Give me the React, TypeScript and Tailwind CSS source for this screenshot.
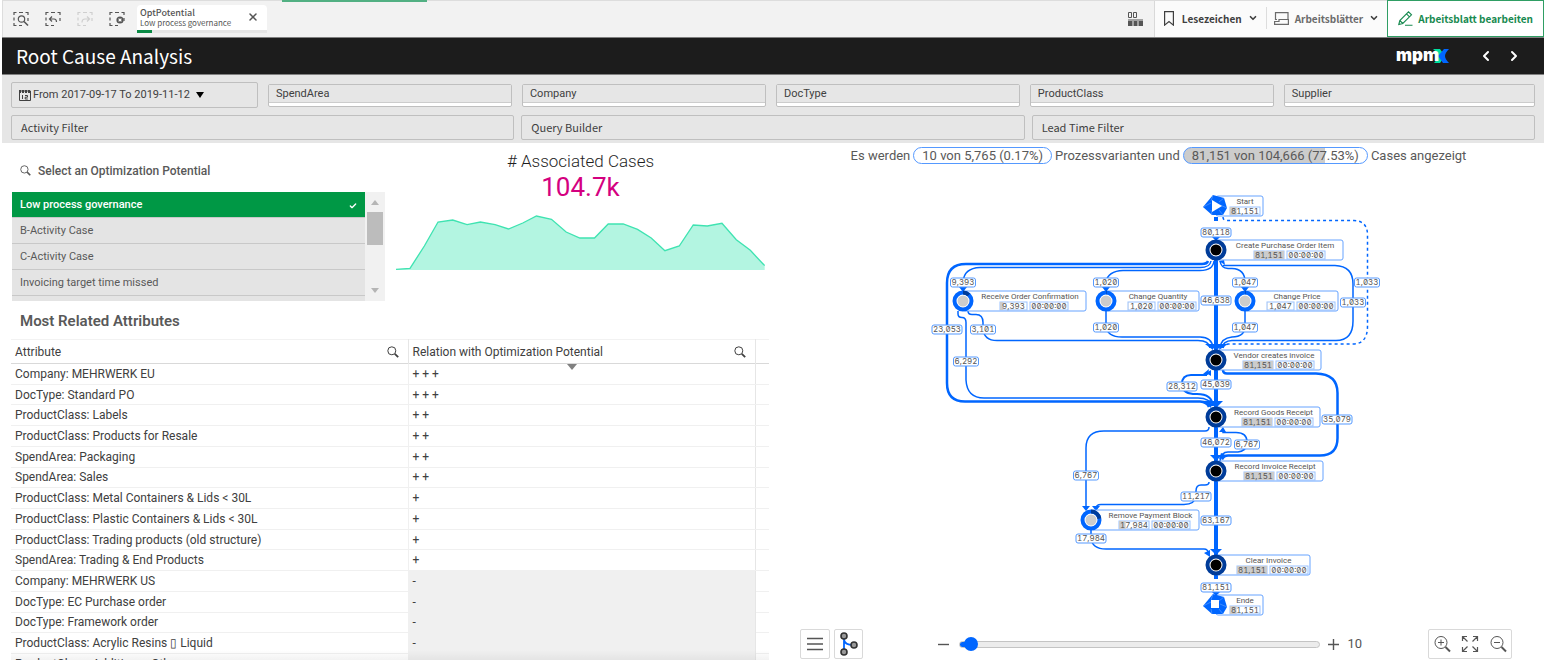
import React, { useState } from 'react';
import { Check, ChevronDown, ChevronLeft, ChevronRight, X } from 'lucide-react';

const filters = ['SpendArea', 'Company', 'DocType', 'ProductClass', 'Supplier'];
const wideFilters = ['Activity Filter', 'Query Builder', 'Lead Time Filter'];
const potentials = ['Low process governance', 'B-Activity Case', 'C-Activity Case', 'Invoicing target time missed'];

const attributes = [
  { name: 'Company: MEHRWERK EU', relation: '+ + +' },
  { name: 'DocType: Standard PO', relation: '+ + +' },
  { name: 'ProductClass: Labels', relation: '+ +' },
  { name: 'ProductClass: Products for Resale', relation: '+ +' },
  { name: 'SpendArea: Packaging', relation: '+ +' },
  { name: 'SpendArea: Sales', relation: '+ +' },
  { name: 'ProductClass: Metal Containers & Lids < 30L', relation: '+' },
  { name: 'ProductClass: Plastic Containers & Lids < 30L', relation: '+' },
  { name: 'ProductClass: Trading products (old structure)', relation: '+' },
  { name: 'SpendArea: Trading & End Products', relation: '+' },
  { name: 'Company: MEHRWERK US', relation: '-' },
  { name: 'DocType: EC Purchase order', relation: '-' },
  { name: 'DocType: Framework order', relation: '-' },
  { name: 'ProductClass: Acrylic Resins \u25AF Liquid', relation: '-' },
  { name: 'ProductClass: Additives - Other', relation: '-' },
];

type ProcessNode = {
  name: string;
  x: number;
  y: number;
  right: number;
  count: string;
  share: number;
  kind: 'full' | 'partial' | 'start' | 'end';
};

const nodes: ProcessNode[] = [
  { name: 'Start', x: 296, y: 26, right: 343, count: '81,151', share: 0.22, kind: 'start' },
  { name: 'Create Purchase Order Item', x: 296, y: 70, right: 423, count: '81,151', share: 1, kind: 'full' },
  { name: 'Receive Order Confirmation', x: 43, y: 121, right: 166, count: '9,393', share: 0.12, kind: 'partial' },
  { name: 'Change Quantity', x: 186, y: 121, right: 279, count: '1,020', share: 0.01, kind: 'partial' },
  { name: 'Change Price', x: 325, y: 121, right: 418, count: '1,047', share: 0.01, kind: 'partial' },
  { name: 'Vendor creates invoice', x: 296, y: 180, right: 401, count: '81,151', share: 1, kind: 'full' },
  { name: 'Record Goods Receipt', x: 296, y: 237, right: 400, count: '81,151', share: 1, kind: 'full' },
  { name: 'Record Invoice Receipt', x: 296, y: 291, right: 403, count: '81,151', share: 1, kind: 'full' },
  { name: 'Remove Payment Block', x: 171, y: 340, right: 279, count: '17,984', share: 0.22, kind: 'partial' },
  { name: 'Clear Invoice', x: 296, y: 385, right: 390, count: '81,151', share: 1, kind: 'full' },
  { name: 'Ende', x: 296, y: 425, right: 343, count: '81,151', share: 0.22, kind: 'end' },
];

const edges = [
  { d: 'M296 37v4M296 80v90M296 190v37M296 247v34M296 301v74M296 395v4', width: 4 },
  { d: 'M288 81Q287 84 282 84H46Q27 84 27 103V203Q27 221.500 45 221.500H280Q287 222 289 227', width: 2.5 },
  { d: 'M291 81Q290 87.500 280 87.500H60Q44 88 43 102V111', width: 1.5 },
  { d: 'M294 81Q293 90.500 280 90.500H203Q188 91 186 102V111', width: 1.5 },
  { d: 'M186 131V146Q187 157 202 157H280Q292 157 293 168', width: 1.5 },
  { d: 'M48 131q0 3.500 4 3.500h4q7 0 7 8V149Q64 160.500 77 160.500H278Q289 160.500 290 168', width: 1.5 },
  { d: 'M38 131v3q0 3.500 4 3.500q4 0 4 5V200Q47 218 64 218H278Q290 218 292 226', width: 1.5 },
  { d: 'M293 226Q292 214 277 214H273Q262 213 262 204Q262 195 271 195H287', width: 2 },
  { d: 'M300 81Q301 88 308 88.500H312Q325 89 325 102V111', width: 1.5 },
  { d: 'M325 131V146Q325 157 312 157Q301 158 300 168', width: 1.5 },
  { d: 'M303 85.500H415Q433 86 433 104V141Q433 160.500 416 160.500H312Q303 161 302 168', width: 1.5 },
  { d: 'M303 190q0 3.500 4 3.500H396Q417.500 194 417.500 213V258Q417.500 275.500 400 275.500H308q-4 0-6 4', width: 2.5 },
  { d: 'M289 247q0 4-4 4H184Q166 251 166 268V329', width: 1.5 },
  { d: 'M300 281Q301 272 308 272H318Q327 271 327 262Q327 252.500 316 252.500H303V250', width: 1.5 },
  { d: 'M289 302q0 3-4 3h-4q-5 0-5 6V316Q275 324.500 264 324.500H181q-5 0-5 4', width: 1.5 },
  { d: 'M171 350V358Q172 369 186 369H284q4 0 5 5', width: 1.5 },
];

const arrows = [
  'M291 56h10l-5 5z',
  'M289 164h14l-7 7z',
  'M289 221h14l-7 7z',
  'M290 275h12l-6 6z',
  'M290 369h12l-6 6z',
  'M291 411h10l-5 5z',
  'M39 107h8l-4 5z',
  'M182 107h8l-4 5z',
  'M321 107h8l-4 5z',
  'M283 221l9-1-1 8z',
  'M285 164h8v6z',
  'M299 170l1-6h8z',
  'M289 189l-1 6-5-1z',
  'M286 193l5-3v6z',
  'M299 81l5-1 1 5z',
  'M299 279l2-6 7 3z',
  'M299 252l4-5 3 5z',
  'M162 326h8l-4 5z',
  'M172 326h8l-4 5z',
  'M284 373l6-3v7z',
];

const edgeLabels = [
  { text: '80,118', x: 296, y: 52 },
  { text: '9,393', x: 43, y: 102 },
  { text: '1,020', x: 186, y: 102 },
  { text: '1,047', x: 325, y: 102 },
  { text: '1,033', x: 447, y: 102 },
  { text: '46,638', x: 296, y: 120 },
  { text: '1,033', x: 433, y: 122 },
  { text: '1,020', x: 186, y: 147 },
  { text: '1,047', x: 325, y: 147 },
  { text: '23,053', x: 27, y: 149 },
  { text: '3,101', x: 63, y: 149 },
  { text: '6,292', x: 46, y: 181 },
  { text: '45,039', x: 296, y: 204 },
  { text: '28,312', x: 262, y: 206 },
  { text: '35,079', x: 417, y: 239 },
  { text: '46,072', x: 296, y: 262 },
  { text: '6,767', x: 327, y: 264 },
  { text: '6,767', x: 166, y: 295 },
  { text: '11,217', x: 276, y: 316 },
  { text: '63,167', x: 296, y: 340 },
  { text: '17,984', x: 171, y: 358 },
  { text: '81,151', x: 296, y: 407 },
];

// Dashed selection frame shared by the selection tools
function SelectionIcon({ children, muted }: { children: React.ReactNode; muted?: boolean }) {
  return (
    <svg viewBox="0 0 16 16" className={`w-4 h-4 ${muted ? 'text-[#cfcfcf]' : 'text-[#555555]'}`} fill="none" stroke="currentColor" strokeWidth="1.2">
      <path d="M1 4V1.500h2.500M6 1.500h4M12.500 1.500H15V4M1 6.500v3M1 12v2.500h2.500M6 14.500h3M15 7v3" />
      {children}
    </svg>
  );
}

function Magnifier({ className }: { className?: string }) {
  return (
    <svg viewBox="0 0 12 12" className={className} fill="none" stroke="currentColor">
      <circle cx="4.800" cy="4.800" r="4" strokeWidth="1" />
      <path d="M7.800 7.800l3.400 3.400" strokeWidth="1.800" />
    </svg>
  );
}

function TopBar() {
  return (
    <header className="flex h-[37px] items-stretch bg-[#f2f2f2] border-t border-l border-[#dddddd] relative font-['Noto_Sans_CJK_SC','Noto_Sans',sans-serif]">
      <div className="absolute -top-px left-[279px] w-[145px] h-0.5 bg-[#52b083]" />
      <div className="flex items-center gap-4 pl-2.5">
        <button aria-label="Smart search">
          <SelectionIcon><circle cx="8.500" cy="8" r="3.200" /><path d="M11 10.500l4 4" strokeWidth="1.600" /></SelectionIcon>
        </button>
        <button aria-label="Step back">
          <SelectionIcon><path d="M7 5.500L4.500 8 7 10.500M4.500 8H9q2.500 0 2.500 3" /></SelectionIcon>
        </button>
        <button aria-label="Step forward">
          <SelectionIcon muted><path d="M10 5.500L12.500 8 10 10.500M12.500 8H8q-3 0-3 3.500" /></SelectionIcon>
        </button>
        <button aria-label="Clear all selections">
          <SelectionIcon><circle cx="11" cy="9" r="3.600" fill="currentColor" stroke="none" /><path d="M9.600 7.600l2.800 2.800M12.400 7.600L9.600 10.400" stroke="#ffffff" /></SelectionIcon>
        </button>
      </div>
      <div className="ml-3 mt-1 w-[130px] h-7 bg-white flex flex-col justify-between rounded-t-sm">
        <div className="flex items-center justify-between pl-[3px] pr-2 pt-0.5 text-[#555555]">
          <div>
            <p className="text-[9px] leading-[11px] font-medium">OptPotential</p>
            <p className="text-[8px] leading-[9px]">Low process governance</p>
          </div>
          <button aria-label="Clear OptPotential"><X className="w-3 h-3" strokeWidth={3} /></button>
        </div>
        <div className="h-[3px] bg-[#e6e6e6]"><div className="h-full w-[15px] bg-[#0a8a45]" /></div>
      </div>

      <div className="ml-auto flex items-stretch text-[#404040] text-[10px] font-bold">
        <button aria-label="Sheet grid" className="pl-4 pr-[11px]">
          <svg viewBox="0 0 15 15" className="w-[15px] h-[15px]" fill="none" stroke="#555555">
            <path d="M.5.500h3v5h-3zM5.500.500h3v5h-3z" />
            <path d="M0 8h15" />
            <path d="M0 9h4.500v5H0zM5.500 9h4v5h-4zM10.500 9H15v5h-4.500z" fill="#555555" stroke="none" />
          </svg>
        </button>
        <div className="flex items-center bg-[#fbfbfb] border-l border-[#d9d9d9] pb-0.5">
          <button className="flex items-center pl-[9px] pr-2">
            <svg viewBox="0 0 10 15" className="w-2.5 h-[15px]" fill="none" stroke="currentColor" strokeWidth="1.200"><path d="M.6.600h8.800v13.500L5 10.500.600 14.100z" /></svg>
            <span className="ml-2">Lesezeichen</span>
            <ChevronDown className="ml-1.5 w-2.5 h-2.5" strokeWidth={4} />
          </button>
          <div className="w-px h-[22px] bg-[#dddddd]" />
          <button className="flex items-center pl-[7px] pr-2 text-[#6b6b6b]">
            <svg viewBox="0 0 15 13" className="w-[15px] h-[13px]" fill="none" stroke="currentColor" strokeWidth="1.200"><path d="M3 7.500H1.500V.600h12.500V8M5 7.500h9.400v4.900H.600V9.500H5z" /></svg>
            <span className="ml-1.5">Arbeitsblätter</span>
            <ChevronDown className="ml-1.5 w-2.5 h-2.5 text-[#404040]" strokeWidth={4} />
          </button>
        </div>
        <button className="flex items-center bg-white border border-[#2f9e64] -mt-px px-2.5 text-[#188a50]">
          <svg viewBox="0 0 15 15" className="w-[15px] h-[15px]" fill="none" stroke="currentColor" strokeWidth="1.100"><path d="M.8 13.500l1-4L10.500.800l3 3L4.800 12.500zM1.800 9.500l3 3M8.500 2.800l3 3M7 14.300h7.500" /></svg>
          <span className="ml-[5px]">Arbeitsblatt bearbeiten</span>
        </button>
      </div>
    </header>
  );
}

function TitleBar() {
  return (
    <div className="flex items-center h-[38px] bg-[#1c1c1c] border-y border-[#808080] pl-3.5 pr-[22px] text-white">
      <h1 className="text-[19px] leading-6 font-['Noto_Sans_CJK_SC','Noto_Sans',sans-serif]">Root Cause Analysis</h1>
      <svg viewBox="0 -6 54 30" className="ml-auto w-[54px] h-[30px]">
        <path d="M37 2h7l5 7-5 7h-6q4-4 4-7t-5-7z" fill="#00e0a0" />
        <path d="M53 2h-5l-6 7 5 7h6q-4-4-4-7t4-7z" fill="#0066ff" />
        <text x="0" y="14" fontSize="17" fontWeight="900" fill="#ffffff" className="font-['Inter',sans-serif]">mpm</text>
      </svg>
      <button aria-label="Previous sheet" className="ml-7"><ChevronLeft className="w-4 h-4" strokeWidth={3} /></button>
      <button aria-label="Next sheet" className="ml-3"><ChevronRight className="w-4 h-4" strokeWidth={3} /></button>
    </div>
  );
}

function FilterBar() {
  return (
    <div className="bg-[#e6e6e6] px-[9px] pt-[7px] pb-[3px] text-[11px] text-[#404040]">
      <div className="flex items-center gap-2.5">
        <button className="flex items-center w-[247px] h-[26px] border border-[#bfbfbf] rounded-xs px-[7px]">
          <svg viewBox="0 0 12 12" className="w-3 h-3" fill="none" stroke="#404040">
            <path d="M.5 2v9.500h11V2z" />
            <path d="M0 2.500h12" strokeWidth="3" strokeDasharray="2 1" />
            <path d="M3.500 6v4M6 6.500h2.500v1.700H6.200V10h2.600" />
          </svg>
          <span className="ml-0.5">From 2017-09-17 To 2019-11-12</span>
          <span className="ml-1.5 border-x-4 border-x-transparent border-t-[6px] border-t-black" />
        </button>
        {filters.map((f) => (
          <button key={f} className="flex-1 last:flex-[1.03] h-[23px] border border-[#bfbfbf] rounded-xs bg-white pb-[3px]">
            <span className="flex items-center h-full px-[7px] pt-0.5 bg-[#e6e6e6] border-b border-[#cccccc]">{f}</span>
          </button>
        ))}
      </div>
      <div className="flex gap-[7px] mt-[7px]">
        {wideFilters.map((f) => (
          <button key={f} className="flex-1 h-[25px] border border-[#bfbfbf] rounded-xs px-[9px] text-left font-['Noto_Sans_CJK_SC','Noto_Sans',sans-serif]">{f}</button>
        ))}
      </div>
    </div>
  );
}

function PotentialList() {
  const [selected, setSelected] = useState(potentials[0]);

  return (
    <section className="w-[374px]">
      <h2 className="flex items-center gap-[7px] h-[49px] pl-[9px] pt-1.5 text-[12px] font-medium text-[#595959]">
        <Magnifier className="w-[11px] h-[11px]" />
        Select an Optimization Potential
      </h2>
      <div className="flex h-[109px] ml-px overflow-hidden text-[11px] text-[#595959]">
        <ul className="flex-1 bg-[#e4e4e4]">
          {potentials.map((p) => (
            <li key={p}>
              <button
                onClick={() => setSelected(p)}
                className={`flex items-center justify-between w-full h-[26px] px-2 pt-0.5 border-b border-[#c8c8c8] ${p === selected ? 'bg-[#009845] text-white font-medium' : ''}`}
              >
                {p}
                {p === selected && <Check className="w-2 h-2" strokeWidth={4} />}
              </button>
            </li>
          ))}
        </ul>
        <div className="flex flex-col items-center w-5 bg-[#f1f1f1] py-2">
          <span className="border-x-4 border-x-transparent border-b-[5px] border-b-[#b5b5b5]" />
          <span className="mt-[7px] w-4 h-[33px] bg-[#bcbcbc]" />
          <span className="mt-auto border-x-4 border-x-transparent border-t-[5px] border-t-[#b5b5b5]" />
        </div>
      </div>
    </section>
  );
}

function CasesKpi() {
  return (
    <section className="flex-1 flex flex-col items-center pl-[11px] pt-2 pr-1">
      <h2 className="text-[17px] leading-5 font-light text-[#1f1f1f]">{'# Associated Cases'}</h2>
      <p className="text-[26px] leading-8 text-[#d4007f]">104.7k</p>
      <svg viewBox="20 222 1106 168" preserveAspectRatio="none" className="mt-[11px] w-full h-14">
        <path
          d="M20 388L62 385L105 318L146 246L190 240L233 254L273 246L317 254L357 267L400 249L441 228L486 238L530 276L571 294H615L656 252H701L744 268L785 294L826 332L869 318L911 255L953 258L997 250L1040 299L1082 331L1125 377V390H20z"
          fill="#b3f5e1"
        />
        <path
          d="M20 388L62 385L105 318L146 246L190 240L233 254L273 246L317 254L357 267L400 249L441 228L486 238L530 276L571 294H615L656 252H701L744 268L785 294L826 332L869 318L911 255L953 258L997 250L1040 299L1082 331L1125 377"
          fill="none"
          stroke="#3fe3b1"
          strokeWidth="4"
        />
      </svg>
    </section>
  );
}

function AttributeTable() {
  return (
    <section>
      <h2 className="pl-[9px] h-[38px] leading-10 text-[15px] font-semibold text-[#595959]">Most Related Attributes</h2>
      <table className="w-full h-[336px] table-fixed border-collapse text-[12px] leading-4 text-[#404040]">
        <thead>
          <tr className="h-6 border-t border-t-[#f2f2f2] border-b border-b-[#d9d9d9] text-left">
            <th className="px-1 font-normal border-r border-[#e6e6e6]">
              <span className="flex items-center justify-between pr-[5px]">
                Attribute
                <button aria-label="Search Attribute"><Magnifier className="w-3 h-3" /></button>
              </span>
            </th>
            <th className="relative w-[347px] px-1 font-normal border-r border-[#e6e6e6]">
              <span className="flex items-center justify-between pr-[5px]">
                Relation with Optimization Potential
                <button aria-label="Search Relation"><Magnifier className="w-3 h-3" /></button>
              </span>
              <span className="absolute left-[158px] top-6 border-x-[5px] border-x-transparent border-t-[6px] border-t-[#808080]" />
            </th>
            <th className="w-3.5" />
          </tr>
        </thead>
        <tbody>
          {attributes.map((a) => (
            <tr key={a.name}>
              <td className="px-1 border-r border-b border-[#f0f0f0] whitespace-nowrap">{a.name}</td>
              <td className={`px-1 border-r border-[#e6e6e6] ${a.relation === '-' ? 'bg-[#f0f0f0]' : 'border-b border-b-[#f0f0f0]'}`}>{a.relation}</td>
              <td className="border-b border-[#f0f0f0]" />
            </tr>
          ))}
        </tbody>
      </table>
    </section>
  );
}

function NodeSymbol({ node }: { node: ProcessNode }) {
  const { x, y, kind, share } = node;

  if (kind === 'start' || kind === 'end') {
    return (
      <g transform={`translate(${x - 13} ${y - 11})`}>
        <path d="M10 0L21 3L24 13L20 20L9 20L0 12z" fill="#0066ff" />
        <path d="M10 0L8 6M21 3L16 7M24 13L17 10M9 20L8 15M0 12L8 8M20 20L16 15" stroke="#66a3ff" strokeWidth="0.6" />
        {kind === 'start' ? <path d="M9 5L19 11L9 17z" fill="#ffffff" /> : <path d="M8 6h8v8H8z" fill="#ffffff" />}
      </g>
    );
  }

  const full = kind === 'full';
  const ringLength = 2 * Math.PI * 8.5;
  return (
    <g>
      <circle cx={x} cy={y} r="8.500" fill="#ffffff" stroke={full ? '#003c99' : '#0066ff'} strokeWidth="4" />
      {!full && (
        <circle
          cx={x}
          cy={y}
          r="8.500"
          fill="none"
          stroke="#003c99"
          strokeWidth="4"
          strokeDasharray={`${ringLength * share} ${ringLength}`}
          transform={`rotate(-90 ${x} ${y})`}
        />
      )}
      <circle cx={x} cy={y} r="5.500" fill={full ? '#000000' : '#cccccc'} />
    </g>
  );
}

function NodeCard({ node }: { node: ProcessNode }) {
  const { x, y, right, count, share, kind } = node;
  const terminal = kind === 'start' || kind === 'end';
  const center = (x + 11 + right) / 2;
  const countWidth = count.length > 5 ? 30 : 27;
  const groupWidth = terminal ? countWidth : countWidth + 41;
  const left = Math.round(center + (terminal ? 0 : 4) - groupWidth / 2);

  return (
    <g>
      <rect x={x} y={y - 10} width={right - x} height="20" rx="2" fill="#ffffff" stroke="#66a3ff" />
      <text x={center} y={y - 2} fontSize="8" textAnchor="middle" fill="#555555" className="font-['Roboto',sans-serif]">{node.name}</text>
      <rect x={left} y={y + 1} width={countWidth} height="8" fill="#ffffff" stroke="#99c2ff" />
      <rect x={left} y={y + 1} width={countWidth * share} height="8" fill="#cccccc" />
      <text x={left + countWidth / 2} y={y + 8} fontSize="8" textAnchor="middle" fill="#555555">{count}</text>
      {!terminal && (
        <>
          <rect x={left + countWidth + 3} y={y + 1} width="38" height="8" fill="#ffffff" stroke="#99c2ff" />
          <text x={left + countWidth + 22} y={y + 8} fontSize="8" textAnchor="middle" fill="#555555">00:00:00</text>
        </>
      )}
      <NodeSymbol node={node} />
    </g>
  );
}

function ProcessGraph() {
  return (
    <svg viewBox="-2 0 481 440" className="w-[481px] h-[440px] slashed-zero tabular-nums font-['Inter',sans-serif]">
      <g fill="none" stroke="#0066ff">
        <path d="M303 37q0 3.500 4 3.500H434Q447.500 41 447.500 55V146Q447.500 164 433 164H308Q304 165 303 168" strokeWidth="1.500" strokeDasharray="3 3" />
        {edges.map((e) => (
          <path key={e.d} d={e.d} strokeWidth={e.width} />
        ))}
      </g>
      {arrows.map((d) => (
        <path key={d} d={d} fill="#0066ff" />
      ))}
      {nodes.map((n) => (
        <NodeCard key={n.name} node={n} />
      ))}
      {edgeLabels.map((l) => {
        const width = l.text.length > 5 ? 30 : 25;
        return (
          <g key={`${l.text}-${l.x}-${l.y}`}>
            <rect x={l.x - width / 2} y={l.y - 4} width={width} height="9" rx="2" fill="#ffffff" stroke="#5599ff" />
            <text x={l.x} y={l.y + 3} fontSize="8" textAnchor="middle" fill="#555555">{l.text}</text>
          </g>
        );
      })}
    </svg>
  );
}

function GraphToolbar() {
  const [detail, setDetail] = useState(10);

  return (
    <div className="flex items-center pl-[27px] pr-8 text-[#555555]">
      <button aria-label="Menu" className="flex items-center justify-center w-[30px] h-[30px] border border-[#d9d9d9] rounded-xs">
        <svg viewBox="0 0 16 14" className="w-4 h-3.5" stroke="currentColor" strokeWidth="1.300"><path d="M0 1.500h16M0 7h16M0 12.500h16" /></svg>
      </button>
      <button aria-label="Graph layout" className="flex items-center justify-center ml-1 w-[29px] h-[30px] border border-[#d9d9d9] rounded-xs">
        <svg viewBox="0 0 20 24" className="w-5 h-6" fill="none">
          <path d="M5 4v16M5 8q1 5 9 5" stroke="#0066ff" strokeWidth="1.800" />
          <g fill="#999999" stroke="#333333" strokeWidth="1.600"><circle cx="5" cy="4" r="3" /><circle cx="5" cy="20" r="3" /><circle cx="15" cy="13" r="3" /></g>
        </svg>
      </button>
      <button aria-label="Less detail" className="ml-[75px]">
        <svg viewBox="0 0 11 11" className="w-[11px] h-[11px]" stroke="currentColor" strokeWidth="1.400"><path d="M0 5.500h11" /></svg>
      </button>
      <input
        type="range"
        aria-label="Level of detail"
        min={9}
        max={100}
        value={detail}
        onChange={(e) => setDetail(Number(e.target.value))}
        className="flex-1 ml-2.5 h-[7px] appearance-none rounded-full border border-[#c4c4c4] bg-[#ececec] bg-[linear-gradient(#0066ff,#0066ff)] bg-[length:8px_100%] bg-no-repeat [&::-webkit-slider-thumb]:appearance-none [&::-webkit-slider-thumb]:w-3.5 [&::-webkit-slider-thumb]:h-3.5 [&::-webkit-slider-thumb]:rounded-full [&::-webkit-slider-thumb]:bg-[#0066ff]"
      />
      <button aria-label="More detail" className="ml-2">
        <svg viewBox="0 0 11 11" className="w-[11px] h-[11px]" stroke="currentColor" strokeWidth="1.400"><path d="M0 5.500h11M5.500 0v11" /></svg>
      </button>
      <span className="ml-2 text-[13px]">{detail}</span>
      <div className="flex items-center justify-between ml-[66px] w-[84px] h-[30px] px-1 border border-[#d9d9d9] rounded-xs">
        <button aria-label="Zoom in">
          <svg viewBox="0 0 18 18" className="w-[18px] h-[18px]" fill="none" stroke="currentColor"><circle cx="8" cy="7.500" r="6" /><path d="M12.500 12l4.500 4.500" strokeWidth="2" /><path d="M5 7.500h6M8 4.500v6" /></svg>
        </button>
        <button aria-label="Fit to view">
          <svg viewBox="0 0 18 18" className="w-[18px] h-[18px]" fill="none" stroke="currentColor" strokeWidth="1.200"><path d="M1.500 6V1.500H6M12 1.500h4.500V6M16.500 12v4.500H12M6 16.500H1.500V12M1.500 1.500l5 5M16.500 1.500l-5 5M16.500 16.500l-5-5M1.500 16.500l5-5" /></svg>
        </button>
        <button aria-label="Zoom out">
          <svg viewBox="0 0 18 18" className="w-[18px] h-[18px]" fill="none" stroke="currentColor"><circle cx="8" cy="7.500" r="6" /><path d="M12.500 12l4.500 4.500" strokeWidth="2" /><path d="M5 7.500h6" /></svg>
        </button>
      </div>
    </div>
  );
}

export default function App() {
  return (
    <div className="relative flex flex-col h-screen overflow-hidden bg-white pl-0.5 font-['Roboto',sans-serif]">
      <TopBar />
      <TitleBar />
      <FilterBar />
      <main className="flex flex-1 min-h-0">
        <div className="relative w-1/2 pl-[9px] pr-1">
          <div className="flex">
            <PotentialList />
            <CasesKpi />
          </div>
          <AttributeTable />
          {/* Scroll fade under the table */}
          <div className="absolute bottom-0 left-[9px] right-1 h-2.5 bg-linear-to-t from-black/5 to-transparent pointer-events-none" />
        </div>
        <div className="flex-1 flex flex-col">
          <p className="flex items-center justify-center gap-[3px] pt-1 text-[13px] leading-4 text-[#595959]">
            Es werden
            <span className="px-2 border border-[#5599ff] rounded-full leading-[15px]">10 von 5,765 (0.17%)</span>
            Prozessvarianten und
            <span className="px-2 border border-[#5599ff] rounded-full leading-[15px] bg-[linear-gradient(90deg,#cccccc_77%,#ffffff_77%)]">81,151 von 104,666 (77.53%)</span>
            Cases angezeigt
          </p>
          <div className="flex justify-center mt-4 mb-[9px]">
            <ProcessGraph />
          </div>
          <GraphToolbar />
        </div>
      </main>
    </div>
  );
}
